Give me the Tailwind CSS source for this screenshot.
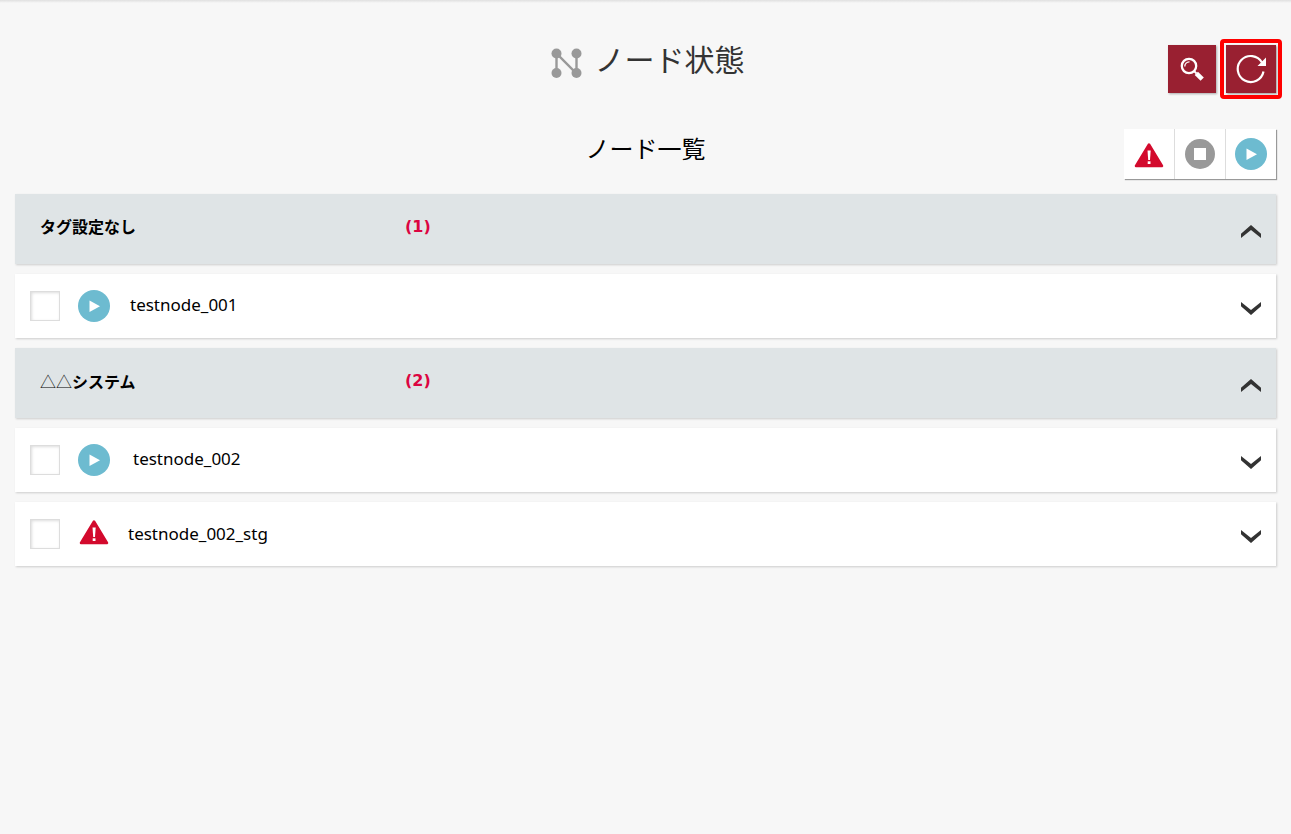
<!DOCTYPE html>
<html lang="ja">
<head>
  <meta charset="UTF-8">
  <meta name="viewport" content="width=device-width, initial-scale=1.0">
  <title>ノード状態</title>
  <script src="https://cdn.jsdelivr.net/npm/@tailwindcss/browser@4"></script>
</head>
<body class="min-h-screen bg-[#f7f7f7] text-black font-['Noto_Sans','Noto_Sans_CJK_JP',sans-serif]">
  <!-- アイコン定義 -->
  <svg class="hidden" aria-hidden="true">
    <symbol id="icon-play" viewBox="0 0 32 32">
      <circle cx="16" cy="16" r="16" fill="#6dbbd0"/>
      <path d="M11.5 10.5v11.5l10.5-5.7z" fill="#fff"/>
    </symbol>
    <symbol id="icon-stop" viewBox="0 0 32 32">
      <circle cx="16" cy="16" r="15" fill="#999"/>
      <rect x="10" y="10" width="12" height="12" fill="#fff"/>
    </symbol>
    <symbol id="icon-alert" viewBox="0 0 32 32">
      <path d="M16 5.5 29 27H3z" fill="#d30a2d" stroke="#d30a2d" stroke-width="2.500" stroke-linejoin="round"/>
      <path d="M14.500 11.500h3.200l-.7 9.500h-1.800z" fill="#fff"/>
      <rect x="14.700" y="22.300" width="2.800" height="2.700" fill="#fff"/>
    </symbol>
    <symbol id="icon-up" viewBox="0 0 20 13">
      <path d="M0 8.700 10 0l10 8.700V13L10 5 0 13z" fill="#333"/>
    </symbol>
    <symbol id="icon-down" viewBox="0 0 20 13">
      <path d="M0 4.300 10 13l10-8.700V0L10 8 0 0z" fill="#333"/>
    </symbol>
  </svg>

  <div class="h-[3px] bg-linear-to-b from-[#e0e0e0] to-[#f7f7f7]"></div>
  <div class="px-[15px]">
    <!-- ヘッダー -->
    <header class="grid grid-cols-[1fr_auto_1fr] items-start pt-[35px]">
      <h1 class="col-start-2 flex items-center gap-[13px] pl-1 text-[30px] leading-[44px] text-[#333]">
        <svg class="mt-[6px] size-[31px]" viewBox="0 0 31 31" fill="#999" stroke="#999" aria-hidden="true">
          <path d="M5.500 26V5.500l20 20V5" fill="none" stroke-width="2.400"/>
          <g stroke="none">
            <circle cx="5.500" cy="5.500" r="5"/>
            <circle cx="25.500" cy="5.500" r="5"/>
            <circle cx="5.500" cy="25" r="5"/>
            <circle cx="25.500" cy="25" r="5"/>
          </g>
        </svg>
        ノード状態
      </h1>
      <div class="mt-[7px] flex justify-end gap-[10px]">
        <button type="button" aria-label="検索" class="grid size-12 place-items-center bg-[#992031] shadow-[1px_1px_2px_#aaa]">
          <svg class="size-6" viewBox="0 0 24 24" fill="none" stroke="#fff" aria-hidden="true">
            <circle cx="9" cy="9" r="7.200" stroke-width="2.300"/>
            <path d="M4.800 9.500A4.500 4.500 0 0 1 9.500 4.800" stroke-width="1.300"/>
            <path d="m14 14 2.500 2.500" stroke-width="1.800"/>
            <path d="m16.300 16.300 5.900 5.900" stroke-width="4.600"/>
          </svg>
        </button>
        <button type="button" aria-label="更新" class="relative grid h-12 w-[50px] place-items-center bg-[#992031] shadow-[1px_1px_2px_#999]">
          <svg class="size-[30px]" viewBox="0 0 30 30" aria-hidden="true">
            <path d="M26 8.500A13 13 0 1 0 27.500 17.500" fill="none" stroke="#fff" stroke-width="2.200"/>
            <path d="M30 3.500v8.500h-8.500z" fill="#fff"/>
          </svg>
          <span class="pointer-events-none absolute -inset-[6px] rounded border-4 border-[#f00]"></span>
        </button>
      </div>
    </header>

    <!-- 一覧の見出しと状態フィルター -->
    <div class="mt-9 grid grid-cols-[1fr_auto_1fr] items-start">
      <h2 class="col-start-2 text-2xl leading-[40px]">ノード一覧</h2>
      <div class="flex justify-end">
        <div class="flex divide-x divide-[#ddd] bg-white shadow-[1px_1px_1px_#999]">
          <button type="button" aria-label="異常" class="grid h-[50px] w-[51px] place-items-center pt-[2px]"><svg class="size-8"><use href="#icon-alert"/></svg></button>
          <button type="button" aria-label="停止" class="grid h-[50px] w-[51px] place-items-center"><svg class="size-8"><use href="#icon-stop"/></svg></button>
          <button type="button" aria-label="稼働中" class="grid h-[50px] w-[50px] place-items-center"><svg class="size-8"><use href="#icon-play"/></svg></button>
        </div>
      </div>
    </div>

    <!-- ノード一覧 -->
    <main class="mt-[15px] flex flex-col gap-[10px]">
      <div class="flex h-[70px] items-center bg-[#dfe4e6] pr-[15px] pl-[25px] font-bold shadow-[1px_1px_2px_#ccc]">
        <h3 class="w-[365px] pb-1">タグ設定なし</h3>
        <span class="flex-1 pb-1 font-['DejaVu_Sans',sans-serif] text-[#dc0441]">(1)</span>
        <button type="button" aria-label="閉じる" class="pt-1"><svg class="h-[13px] w-5"><use href="#icon-up"/></svg></button>
      </div>
      <div class="flex h-16 items-center bg-white pr-[15px] pl-[15px] shadow-[1px_1px_2px_#ccc]">
        <input type="checkbox" id="node1" class="size-[30px] appearance-none border border-[#ddd] bg-white shadow-[inset_1px_1px_3px_#ddd]">
        <svg class="mb-px ml-[18px] size-8" role="img" aria-label="稼働中"><use href="#icon-play"/></svg>
        <label for="node1" class="ml-5 flex-1 pb-[2px] text-[17px]">testnode_001</label>
        <button type="button" aria-label="開く" class="pt-1"><svg class="h-[13px] w-5"><use href="#icon-down"/></svg></button>
      </div>

      <div class="flex h-[70px] items-center bg-[#dfe4e6] pr-[15px] pl-[25px] font-bold shadow-[1px_1px_2px_#ccc]">
        <h3 class="w-[365px] pb-1"><span class="font-light font-['Noto_Sans_CJK_JP']">△△</span>システム</h3>
        <span class="flex-1 pb-1 font-['DejaVu_Sans',sans-serif] text-[#dc0441]">(2)</span>
        <button type="button" aria-label="閉じる" class="pt-1"><svg class="h-[13px] w-5"><use href="#icon-up"/></svg></button>
      </div>
      <div class="flex h-16 items-center bg-white pr-[15px] pl-[15px] shadow-[1px_1px_2px_#ccc]">
        <input type="checkbox" id="node2" class="size-[30px] appearance-none border border-[#ddd] bg-white shadow-[inset_1px_1px_3px_#ddd]">
        <svg class="mb-px ml-[18px] size-8" role="img" aria-label="稼働中"><use href="#icon-play"/></svg>
        <label for="node2" class="ml-[23px] flex-1 pb-[2px] text-[17px]">testnode_002</label>
        <button type="button" aria-label="開く" class="pt-1"><svg class="h-[13px] w-5"><use href="#icon-down"/></svg></button>
      </div>
      <div class="flex h-16 items-center bg-white pr-[15px] pl-[15px] shadow-[1px_1px_2px_#ccc]">
        <input type="checkbox" id="node3" class="size-[30px] appearance-none border border-[#ddd] bg-white shadow-[inset_1px_1px_3px_#ddd]">
        <svg class="mb-1 ml-[18px] size-8" role="img" aria-label="異常"><use href="#icon-alert"/></svg>
        <label for="node3" class="ml-[18px] flex-1 text-[17px]">testnode_002_stg</label>
        <button type="button" aria-label="開く" class="pt-1"><svg class="h-[13px] w-5"><use href="#icon-down"/></svg></button>
      </div>
    </main>
  </div>
</body>
</html>
